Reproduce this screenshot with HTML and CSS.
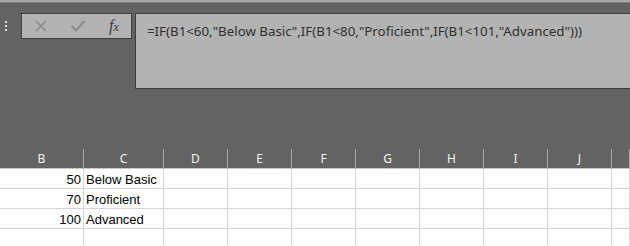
FILE: index.html
```html
<!DOCTYPE html>
<html lang="en">
<head>
  <meta charset="UTF-8">
  <title>Formula Bar</title>
  <link rel="stylesheet" href="styles.css">
</head>
<body>
  <!-- Formula bar (expanded) -->
  <div class="topline"></div>
  <div class="bar">
    <div class="grip">
      <span></span><span></span><span></span>
    </div>
    <div class="buttons">
      <svg class="ico" width="14" height="14" viewBox="0 0 14 14">
        <path d="M2 2 L12 12 M12 2 L2 12" stroke="#8c8c8c" stroke-width="1.6" fill="none"/>
      </svg>
      <svg class="ico" width="16" height="14" viewBox="0 0 16 14">
        <path d="M1.5 7 L6 11.5 L14.5 2" stroke="#8c8c8c" stroke-width="2" fill="none"/>
      </svg>
      <span class="fx">f<small>x</small></span>
    </div>
    <div class="formula">=IF(B1&lt;60,"Below Basic",IF(B1&lt;80,"Proficient",IF(B1&lt;101,"Advanced")))</div>
  </div>

  <!-- Sheet -->
  <div class="sheet">
    <div class="hdr">B</div>
    <div class="hdr">C</div>
    <div class="hdr">D</div>
    <div class="hdr">E</div>
    <div class="hdr">F</div>
    <div class="hdr">G</div>
    <div class="hdr">H</div>
    <div class="hdr">I</div>
    <div class="hdr">J</div>
    <div class="hdr"></div>

    <div class="cell num">50</div><div class="cell">Below Basic</div>
    <div class="cell"></div><div class="cell"></div><div class="cell"></div><div class="cell"></div>
    <div class="cell"></div><div class="cell"></div><div class="cell"></div><div class="cell"></div>

    <div class="cell num">70</div><div class="cell">Proficient</div>
    <div class="cell"></div><div class="cell"></div><div class="cell"></div><div class="cell"></div>
    <div class="cell"></div><div class="cell"></div><div class="cell"></div><div class="cell"></div>

    <div class="cell num">100</div><div class="cell">Advanced</div>
    <div class="cell"></div><div class="cell"></div><div class="cell"></div><div class="cell"></div>
    <div class="cell"></div><div class="cell"></div><div class="cell"></div><div class="cell"></div>

    <div class="cell"></div><div class="cell"></div>
    <div class="cell"></div><div class="cell"></div><div class="cell"></div><div class="cell"></div>
    <div class="cell"></div><div class="cell"></div><div class="cell"></div><div class="cell"></div>
  </div>
</body>
</html>
```

FILE: styles.css
```css
body { margin: 0; background: #636363; font-family: "Noto Sans", "Liberation Sans", sans-serif; overflow: hidden; }
.topline { height: 4px; background: linear-gradient(#a8a8a8 0, #a8a8a8 2px, #5a5a5a 3px, #636363 4px); }
.bar { height: 145px; display: flex; align-items: flex-start; padding-top: 9px; box-sizing: border-box; }
.grip { width: 21px; display: flex; flex-direction: column; gap: 2px; padding: 8px 0 0 5px; box-sizing: border-box; }
.grip span { width: 2px; height: 2px; background: #e0e0e0; }
.buttons { width: 111px; height: 26px; box-sizing: border-box; border: 1px solid #3f3f3f; background: #b3b3b3; display: flex; align-items: center; padding-left: 12px; gap: 22px; }
.buttons .ico { display: block; }
.fx { font-family: "Liberation Serif", serif; font-style: italic; font-size: 16px; color: #3a3a3a; margin-left: 1px; }
.fx small { font-size: 12px; }
.formula { flex: 1; height: 76px; margin-left: 3px; box-sizing: border-box; border: 1px solid #3d3d3d; border-right: none; background: #b3b3b3; color: #303030; font-size: 13.3px; padding: 8px 0 0 11px; white-space: nowrap; }
.sheet { display: grid; grid-template-columns: 84px 80px repeat(7, 64px) 1fr; grid-auto-rows: 20px; background: #fff; }
.hdr { height: 19px; background: #636363; border-right: 1px solid #a9a9a9; border-bottom: 1px solid #c8c8c8; color: #f4f4f4; font-size: 12px; text-align: center; line-height: 19px; }
.cell { border-right: 1px solid #d4d4d4; border-bottom: 1px solid #d4d4d4; font-family: "Liberation Sans", sans-serif; font-size: 13px; color: #000; line-height: 21px; padding: 0 2px; overflow: hidden; white-space: nowrap; }
.num { text-align: right; }
```
